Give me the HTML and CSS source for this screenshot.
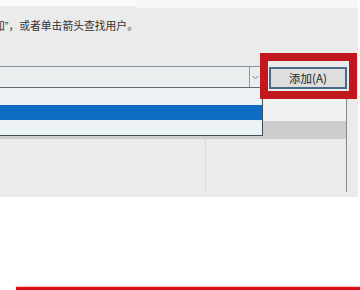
FILE: index.html
```html
<!DOCTYPE html>
<html lang="zh-CN">
<head>
<meta charset="utf-8">
<link rel="stylesheet" href="styles.css">
</head>
<body>
<div class="screen">
  <div class="dialog">
    <div class="top">
      <div class="top-left"></div>
      <div class="top-right"></div>
    </div>
    <p class="hint"><span>加</span><span class="q">”</span>，或者单击箭头查找用户。</p>
    <div class="row">
      <div class="combo">
        <div class="combo-field"></div>
        <div class="combo-arrow">
          <svg width="7" height="5" viewBox="0 0 7 5"><polyline points="0.5,0.8 3.5,3.8 6.5,0.8" fill="none" stroke="#7a7a7a" stroke-width="1"/></svg>
        </div>
        <div class="dropdown">
          <div class="dd-row r1"></div>
          <div class="dd-row sel"></div>
          <div class="dd-row r3"></div>
        </div>
      </div>
      <div class="btn-wrap">
        <button class="add">添加(A)</button>
        <div class="highlight"></div>
      </div>
    </div>
    <div class="list">
      <div class="list-row first"></div>
      <div class="list-row grey"></div>
      <div class="list-body">
        <div class="col col1"></div>
        <div class="col col2"></div>
      </div>
    </div>
  </div>
  <div class="bottom">
    <div class="redline"></div>
  </div>
</div>
</body>
</html>
```
FILE: styles.css
```css
html, body {
  margin: 0;
  padding: 0;
  background: #ffffff;
}
body {
  width: 360px;
  height: 290px;
  overflow: hidden;
  font-family: "Noto Sans CJK SC", "Noto Sans", sans-serif;
}
.screen {
  display: flex;
  flex-direction: column;
  height: 290px;
}
.dialog {
  width: 358px;
  height: 197px;
  background: #ebebeb;
  display: flex;
  flex-direction: column;
  box-sizing: border-box;
}
.top {
  display: flex;
  height: 8px;
  align-items: flex-start;
}
.top-left {
  width: 136px;
  height: 6px;
  background: #fbfbfb;
}
.top-right {
  flex: 1;
  height: 8px;
  background: #f6f6f6;
}
.hint {
  margin: 11px 0 0 -6px;
  font-size: 10.8px;
  line-height: 12px;
  height: 12px;
  color: #333333;
  white-space: nowrap;
}
.hint .q {
  font-family: "Liberation Sans", sans-serif;
}
.row {
  display: flex;
  align-items: flex-start;
  margin-top: 35px;
}
.combo {
  position: relative;
  width: 262px;
  height: 22px;
  box-sizing: border-box;
  border-top: 1px solid #84969a;
  border-bottom: 1px solid #5a6c70;
  border-right: 1px solid #84969a;
  background: #ebeeee;
  display: flex;
}
.combo-field {
  width: 249px;
}
.combo-arrow {
  flex: 1;
  border-left: 1px solid #8d9ca2;
  display: flex;
  align-items: center;
  justify-content: center;
  padding-right: 1px;
}
.combo-arrow svg {
  display: block;
  margin-top: 1px;
}
.dropdown {
  position: absolute;
  left: 0;
  top: 21px;
  width: 263px;
  box-sizing: border-box;
  border-right: 1px solid #3f4d55;
  border-bottom: 1px solid #3f4d55;
  background: #edf2f4;
  z-index: 2;
}
.dd-row.r1 { height: 17px; }
.dd-row.sel { height: 15px; background: #0d6cc4; }
.dd-row.r3 { height: 15px; }
.btn-wrap {
  position: relative;
  margin-left: 7px;
  margin-top: 1px;
}
.add {
  display: block;
  width: 78px;
  height: 22px;
  box-sizing: border-box;
  margin: 0;
  padding: 0;
  border: 2px solid #4b6b8b;
  background: #dedede;
  font-family: "Noto Sans CJK SC", "Noto Sans", sans-serif;
  font-size: 11.5px;
  line-height: 16px;
  color: #222222;
}
.highlight {
  position: absolute;
  left: -9px;
  top: -14px;
  width: 97px;
  height: 46px;
  box-sizing: border-box;
  border: 8px solid #c2171d;
  z-index: 3;
}
.list {
  margin-top: 7px;
  width: 347px;
  height: 96px;
  box-sizing: border-box;
  border-right: 1px solid #8a8a8a;
  display: flex;
  flex-direction: column;
}
.list-row.first {
  height: 25px;
  background: #f1f1f1;
}
.list-row.grey {
  height: 18px;
  background: #cdcdcd;
}
.list-body {
  flex: 1;
  display: flex;
}
.col1 {
  width: 205px;
  border-right: 1px solid #d8d8d8;
}
.col2 {
  flex: 1;
}
.bottom {
  flex: 1;
  display: flex;
  flex-direction: column;
  justify-content: flex-end;
  padding-left: 16px;
}
.redline {
  height: 3px;
  background: #dc0f17;
  box-shadow: 0 -1px 2px rgba(230, 40, 40, 0.35);
}
```
